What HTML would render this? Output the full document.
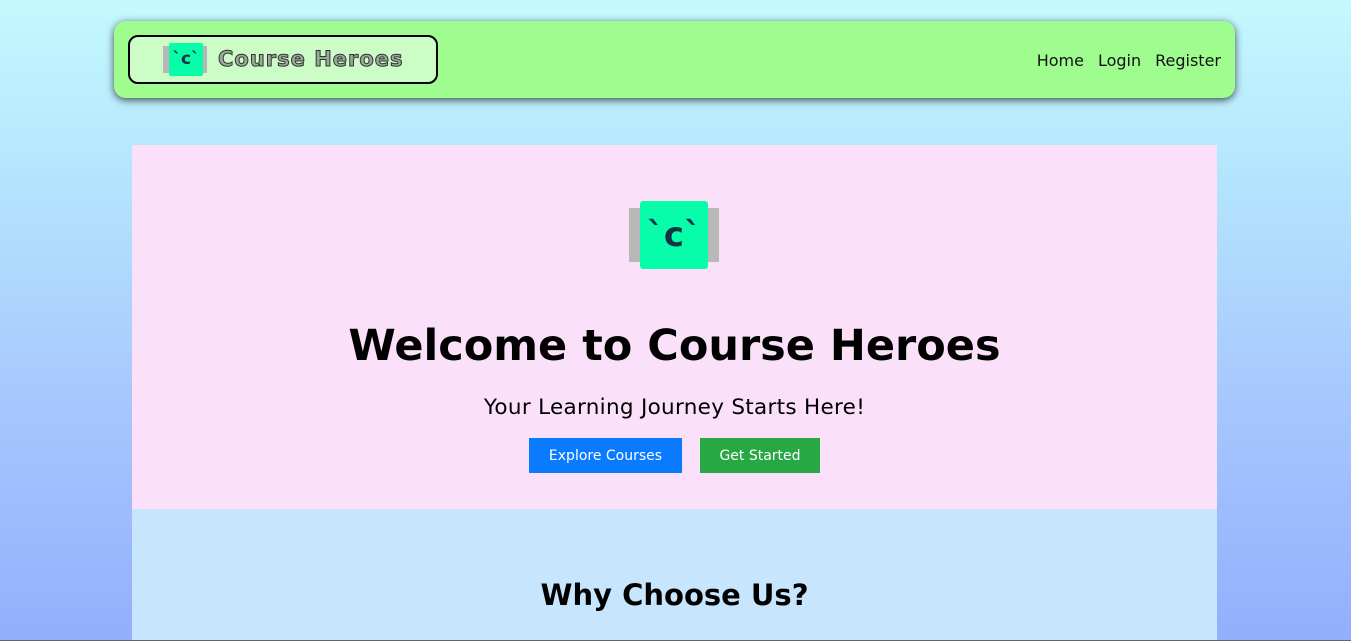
<!DOCTYPE html>
<html><head><style>
html,body{margin:0;padding:0;}
body{width:1351px;height:641px;overflow:hidden;position:relative;background:linear-gradient(#c4f9fe,#b3e3fd 30%,#a8c9fd 60%,#93aefd);font-family:"DejaVu Sans","Liberation Sans",sans-serif;}
.nav{position:absolute;left:114px;top:21px;width:1121px;height:77px;background:#9ffd8f;border-radius:12px;box-shadow:0 2px 8px rgba(0,0,0,.7);}
.logo{position:absolute;left:14px;top:14px;width:306px;height:45px;border:2px solid #000;border-radius:10px;background:#ccfdc6;}
.gray{background:#b8b8b8;position:absolute}
.grn{background:#08fdaa;position:absolute;border-radius:2px;text-align:center;font-weight:bold;color:#134;}
.brand{position:absolute;left:88px;top:10px;font-size:21px;font-weight:bold;color:#99aa99;-webkit-text-stroke:1px #333;letter-spacing:1px;font-family:"DejaVu Sans",sans-serif;}
.links{position:absolute;right:14px;top:30px;font-size:16px;color:#111;}
.links span{margin-left:14px}
.hero{position:absolute;left:132px;top:145px;width:1085px;height:364px;background:#fae1f9;text-align:center;}
.sec{position:absolute;left:132px;top:509px;width:1085px;height:132px;background:#c7e6fe;text-align:center;}
h1{position:absolute;left:0;right:0;top:176px;margin:0;font-size:43px;font-weight:bold;color:#000;}
.sub{position:absolute;left:0;right:0;top:250px;font-size:21.5px;letter-spacing:0.3px}
.b{position:absolute;top:293px;height:35px;line-height:37px;color:#fff;font-size:14px;}
h2{position:absolute;left:0;right:0;top:69px;margin:0;font-size:29px;}
.bar{position:absolute;left:0;bottom:0;width:1351px;height:1px;background:#666}
</style></head><body>
<div class="nav">
 <div class="logo">
  <div class="gray" style="left:33px;top:9px;width:44px;height:27px"></div>
  <div class="grn" style="left:39px;top:6px;width:34px;height:33px;font-size:17px;line-height:33px">`c`</div>
  <div class="brand">Course Heroes</div>
 </div>
 <div class="links"><span>Home</span><span>Login</span><span>Register</span></div>
</div>
<div class="hero">
 <div class="gray" style="left:497px;top:63px;width:90px;height:54px"></div>
 <div class="grn" style="left:508px;top:56px;width:68px;height:68px;font-size:34px;line-height:68px;border-radius:3px">`c`</div>
 <h1>Welcome to Course Heroes</h1>
 <div class="sub">Your Learning Journey Starts Here!</div>
 <div class="b" style="left:397px;width:153px;background:#0a7bff">Explore Courses</div>
 <div class="b" style="left:568px;width:120px;background:#28a745">Get Started</div>
</div>
<div class="sec"><h2>Why Choose Us?</h2></div>
<div class="bar"></div>
</body></html>
